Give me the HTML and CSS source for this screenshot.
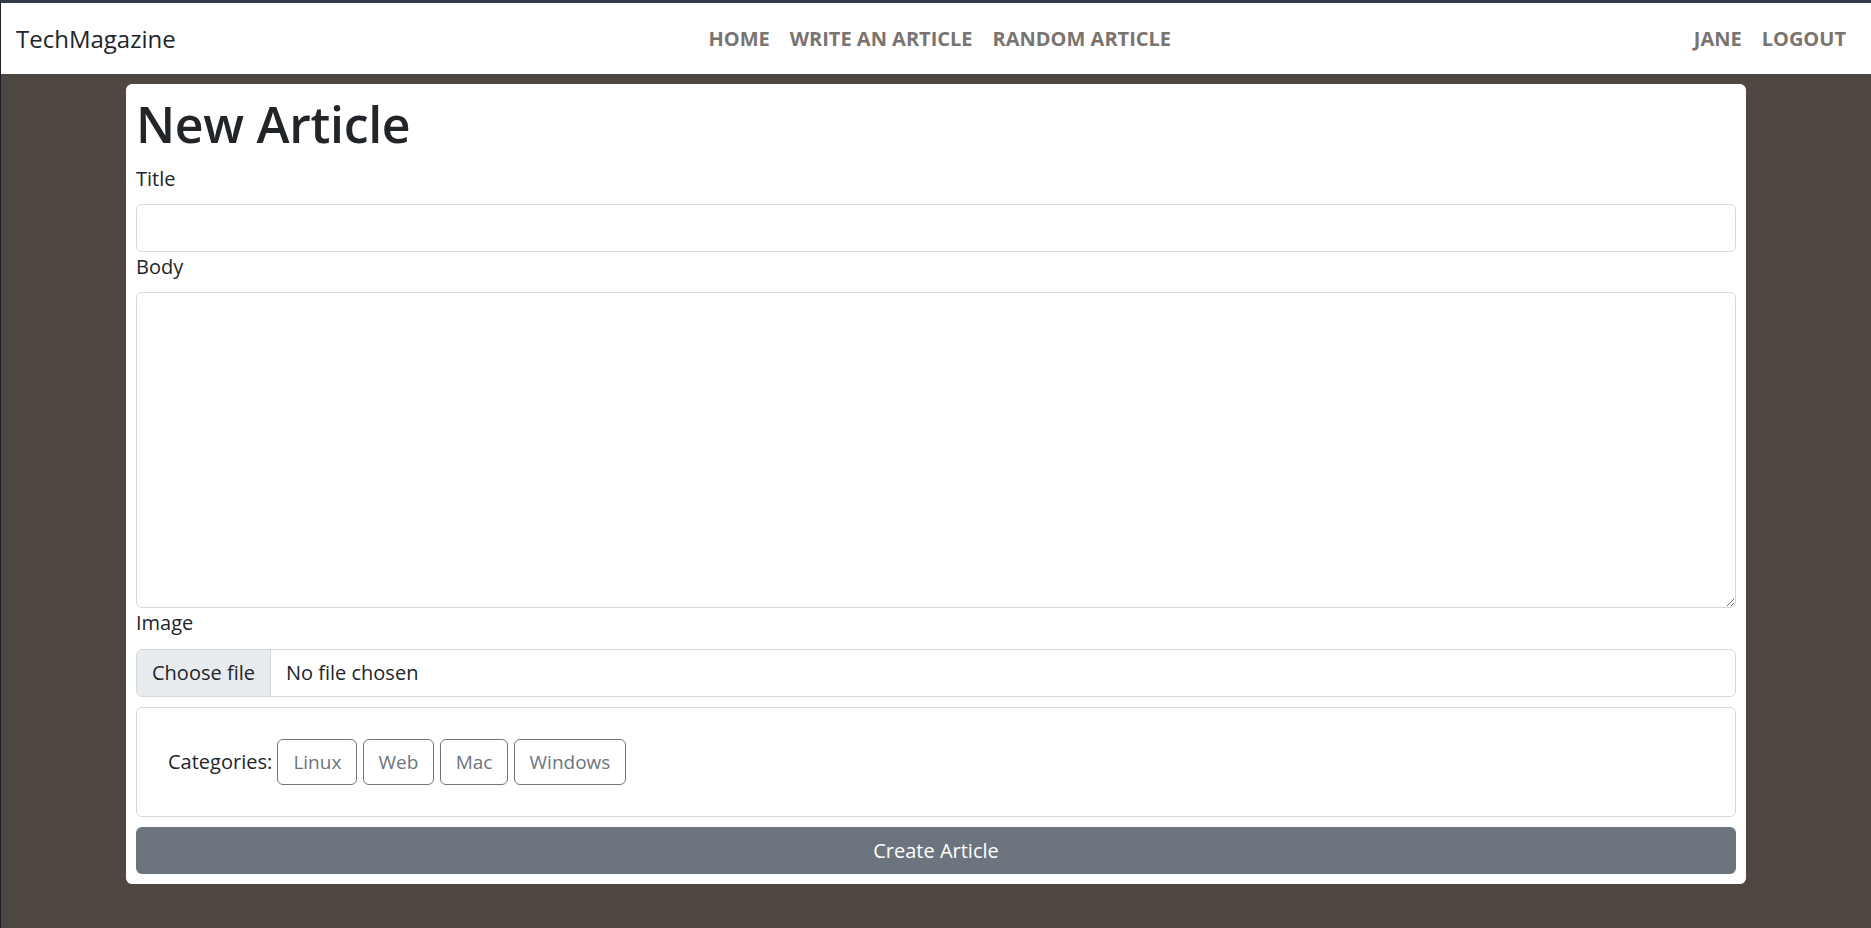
FILE: index.html
```html
<!DOCTYPE html>
<html lang="en">
<head>
<meta charset="utf-8">
<title>New Article - TechMagazine</title>
<link rel="stylesheet" href="styles.css">
</head>
<body>
<nav class="navbar">
  <a class="brand" href="#">TechMagazine</a>
  <ul class="nav nav-center">
    <li><a class="nav-link" href="#">Home</a></li>
    <li><a class="nav-link" href="#">Write an article</a></li>
    <li><a class="nav-link" href="#">Random article</a></li>
  </ul>
  <ul class="nav nav-right">
    <li><a class="nav-link" href="#">Jane</a></li>
    <li><a class="nav-link" href="#">Logout</a></li>
  </ul>
</nav>
<main class="container">
  <div class="card">
    <h1 class="page-title">New Article</h1>
    <form class="article-form">
      <label class="form-label" for="title">Title</label>
      <input class="form-control" id="title" type="text">
      <label class="form-label" for="body">Body</label>
      <textarea class="form-control body-input" id="body"></textarea>
      <label class="form-label">Image</label>
      <div class="file-input">
        <span class="file-btn">Choose file</span>
        <span class="file-name">No file chosen</span>
      </div>
      <div class="categories">
        <span class="cat-label">Categories:</span>
        <button type="button" class="cat-btn">Linux</button>
        <button type="button" class="cat-btn">Web</button>
        <button type="button" class="cat-btn">Mac</button>
        <button type="button" class="cat-btn">Windows</button>
      </div>
      <button type="button" class="submit-btn">Create Article</button>
    </form>
  </div>
</main>
</body>
</html>
```

FILE: styles.css
```css
* { box-sizing: border-box; }

html, body {
  margin: 0;
  padding: 0;
}

body {
  min-height: 928px;
  background: #4e4641;
  border-top: 3px solid #303c49;
  border-left: 1px solid #1f2329;
  font-family: "Open Sans", "Noto Sans", sans-serif;
  font-size: 20px;
  line-height: 30px;
  color: #212529;
}

.navbar {
  display: flex;
  align-items: center;
  height: 71px;
  padding: 0 15px;
  background: #fff;
}

.brand {
  font-size: 24px;
  line-height: 30px;
  color: #212529;
  text-decoration: none;
  margin-right: 20px;
}

.nav {
  display: flex;
  list-style: none;
  margin: 0;
  padding: 0;
}

.nav-center {
  flex: 1;
  justify-content: center;
}

.nav-link {
  display: block;
  padding: 10px;
  font-size: 20px;
  font-weight: 700;
  text-transform: uppercase;
  text-decoration: none;
  color: #7a7470;
}

.container {
  width: 1620px;
  margin: 10px auto 0;
}

.card {
  background: #fff;
  border-radius: 6px;
  padding: 10px;
}

.page-title {
  margin: 0 0 10px;
  font-size: 50px;
  line-height: 60px;
  font-weight: 600;
  letter-spacing: -0.3px;
}

.article-form {
  display: flex;
  flex-direction: column;
}

.form-label {
  display: block;
  margin-bottom: 10px;
}

.form-control {
  display: block;
  width: 100%;
  height: 48px;
  padding: 7px 15px;
  font: inherit;
  color: #212529;
  background: #fff;
  border: 1px solid #d3d8de;
  border-radius: 6px;
}

.body-input {
  height: 316px;
  resize: vertical;
}

.file-input {
  display: flex;
  height: 48px;
  margin-top: 1px;
  border: 1px solid #d3d8de;
  border-radius: 6px;
  overflow: hidden;
}

.file-btn {
  display: flex;
  align-items: center;
  padding: 0 15px;
  background: #e9ecef;
  border-right: 1px solid #d3d8de;
}

.file-name {
  display: flex;
  align-items: center;
  padding: 0 15px;
}

.categories {
  margin-top: 10px;
  padding: 31px 30px 31px 31px;
  border: 1px solid #d3d8de;
  border-radius: 6px;
}

.cat-btn {
  height: 46px;
  padding: 7px 15px;
  font: inherit;
  font-size: 19px;
  color: #6c757d;
  background: transparent;
  border: 1px solid #6c757d;
  border-radius: 6px;
  vertical-align: baseline;
}

.submit-btn {
  margin-top: 10px;
  height: 47px;
  width: 100%;
  font: inherit;
  color: #fff;
  background: #6c757d;
  border: none;
  border-radius: 6px;
}
```
